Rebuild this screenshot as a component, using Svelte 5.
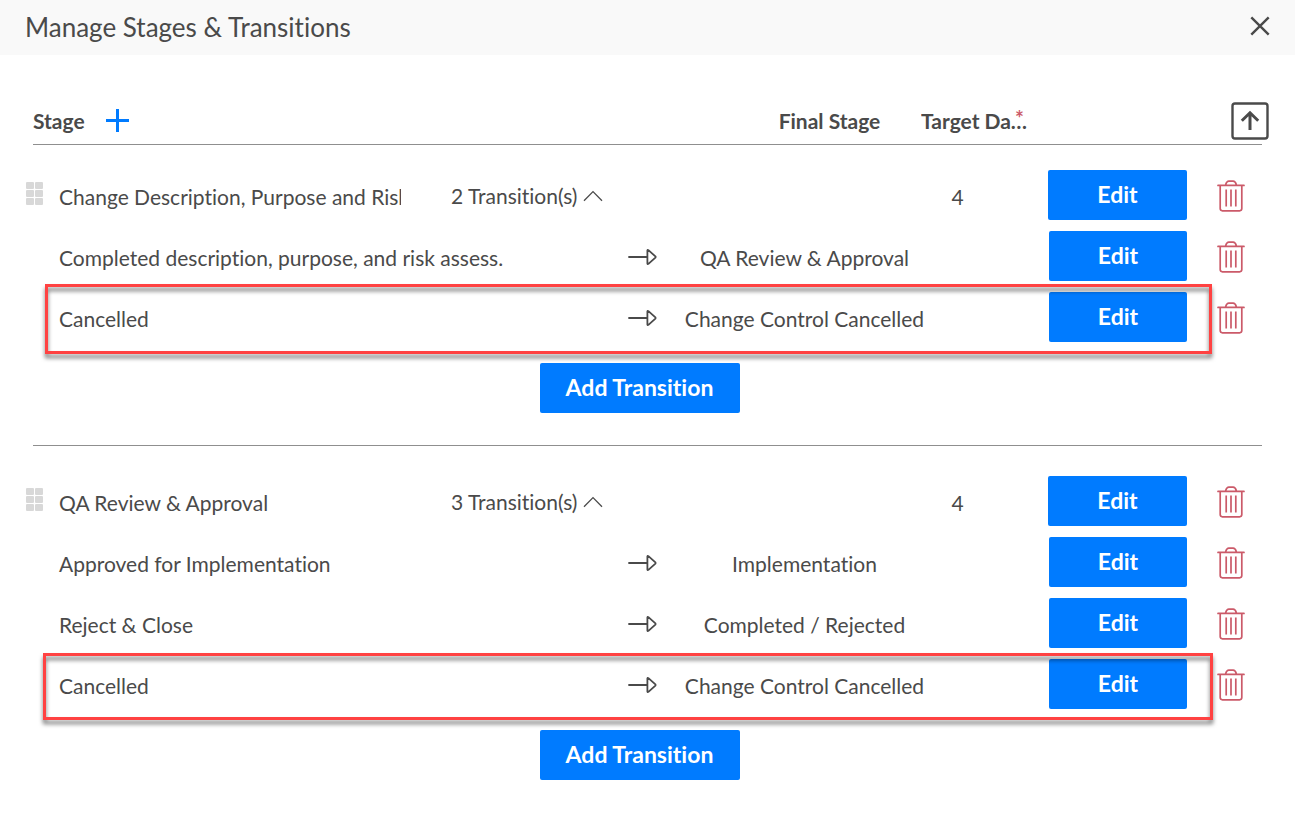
<script>
  const stages = [
    {
      name: 'Change Description, Purpose and Risk Assessment',
      days: 4,
      transitions: [
        { name: 'Completed description, purpose, and risk assess.', to: 'QA Review & Approval' },
        { name: 'Cancelled', to: 'Change Control Cancelled', mark: 'tall' }
      ]
    },
    {
      name: 'QA Review & Approval',
      days: 4,
      transitions: [
        { name: 'Approved for Implementation', to: 'Implementation' },
        { name: 'Reject & Close', to: 'Completed / Rejected' },
        { name: 'Cancelled', to: 'Change Control Cancelled', mark: 'wide' }
      ]
    }
  ];
</script>

{#snippet actions(label)}
  <button class="primary edit" aria-label={`Edit ${label}`}>Edit</button>
  <button class="plain trash" aria-label={`Delete ${label}`}>
    <svg width="28" height="32" viewBox="0 0 28 32" fill="none" stroke="#cb5a69" stroke-width="1.7" stroke-linecap="round" stroke-linejoin="round">
      <path d="M1 5.4h26M8.5 5.2c.6-2.2 1.7-4 3.4-4h4.2c1.7 0 2.8 1.8 3.4 4M3.2 5.6v23c0 1.4.8 2.2 2.2 2.2h17.2c1.4 0 2.2-.8 2.2-2.2v-23" />
      <path stroke-linecap="butt" d="M9.2 9.5v17M14 9.5v17M18.8 9.5v17" />
    </svg>
  </button>
{/snippet}

<div class="dialog" role="dialog" aria-labelledby="title">
  <header class="titlebar">
    <h1 id="title">Manage Stages &amp; Transitions</h1>
    <button class="plain" aria-label="Close">
      <svg width="20" height="20" viewBox="0 0 20 20" stroke="#4a4a4a" stroke-width="2.4">
        <path d="M1.3 1.3l17.4 17.4M18.7 1.3L1.3 18.7" />
      </svg>
    </button>
  </header>

  <div class="columns">
    <div class="col-stage">
      <span>Stage</span>
      <button class="plain" aria-label="Add stage">
        <svg width="24" height="24" viewBox="0 0 24 24" stroke="#007bff" stroke-width="3">
          <path d="M12.5 0v23M1 11.5h23" />
        </svg>
      </button>
    </div>
    <span class="col-final">Final Stage</span>
    <span class="col-days"><span class="clip">Target Days</span><sup>*</sup></span>
    <button class="plain top" aria-label="Move to top">
      <svg width="38" height="38" viewBox="0 0 38 38" fill="none" stroke="#4a4a4a">
        <rect x="1.5" y="1.5" width="35" height="35" rx="2.5" stroke-width="2.4" />
        <path d="M19 28V11M10.8 18.8L19 10.8l8.2 8" stroke-width="3" />
      </svg>
    </button>
  </div>

  {#each stages as stage}
    <section>
      <div class="row stage">
        <svg class="grip" width="18" height="24" viewBox="0 0 18 24" fill="#d8d8d8">
          {#each [0, 8, 16] as y}
            <rect x="0" y={y} width="8" height="7" rx="1" />
            <rect x="9" y={y} width="8" height="7" rx="1" />
          {/each}
        </svg>
        <span class="name clipped">{stage.name}</span>
        <button class="plain toggle" aria-expanded="true">
          {stage.transitions.length} Transition(s)
          <svg width="20" height="12" viewBox="0 0 20 12" fill="none" stroke="#4a4a4a" stroke-width="1.3">
            <path d="M1 10.8L10 1.6l9 9.2" />
          </svg>
        </button>
        <span class="days">{stage.days}</span>
        {@render actions(stage.name)}
      </div>
      {#each stage.transitions as t}
        <div class="row transition">
          <span class="name">{t.name}</span>
          <svg class="arrow" width="30" height="18" viewBox="0 0 30 18" fill="none" stroke="#4a4a4a" stroke-width="1.8" stroke-linecap="round" stroke-linejoin="round">
            <path d="M1 9h18M19.4 2.5v13q.2 1 1 .4L27.4 9.6q.5-.6 0-1.2L20.4 2.1q-.8-.6-1 .4z" />
          </svg>
          <span class="target">{t.to}</span>
          {@render actions(t.name)}
          {#if t.mark}<span class="mark {t.mark}"></span>{/if}
        </div>
      {/each}
      <button class="primary add">Add Transition</button>
    </section>
  {/each}
</div>

<style>
  :global(body) {
    margin: 0;
    background: #fff;
  }
  .dialog {
    color: #4a4a4a;
    font: 21px/28px Lato, sans-serif;
    font-variant-ligatures: none;
  }
  button {
    font: inherit;
    font-variant-ligatures: none;
    color: inherit;
    cursor: pointer;
  }
  svg {
    display: block;
    flex: none;
  }
  .plain {
    display: flex;
    padding: 0;
    border: 0;
    background: none;
  }
  .titlebar {
    display: flex;
    align-items: center;
    justify-content: space-between;
    height: 55px;
    padding: 0 25px 2px;
    box-sizing: border-box;
    background: #f9f9f9;
  }
  .titlebar .plain {
    padding-bottom: 2px;
  }
  h1 {
    margin: 0;
    font-size: 26px;
    font-weight: 400;
  }
  .columns {
    display: grid;
    grid-template-columns: minmax(0, 705fr) minmax(0, 183fr) 108px minmax(0, 233fr);
    align-items: center;
    height: 90px;
    margin: 0 33px;
    padding-top: 42px;
    box-sizing: border-box;
    border-bottom: 1px solid #8f8f8f;
    font-weight: 700;
  }
  .col-stage {
    display: flex;
    align-items: center;
    gap: 20px;
  }
  .col-final {
    text-align: center;
  }
  .col-days {
    position: relative;
  }
  .clip {
    display: block;
    overflow: hidden;
    text-overflow: ellipsis;
    white-space: nowrap;
  }
  sup {
    position: absolute;
    top: 1px;
    right: 5px;
    color: #cb5a69;
    font-size: 21px;
    font-weight: 700;
    line-height: 20px;
  }
  .top {
    justify-self: end;
    margin-right: -7px;
  }
  section {
    display: flex;
    flex-direction: column;
    gap: 11px;
    margin: 0 33px;
    padding: 25px 0 32px;
  }
  section + section {
    padding-top: 30px;
    border-top: 1px solid #8f8f8f;
  }
  .row {
    position: relative;
    display: grid;
    align-items: center;
    height: 50px;
    margin: 0 17px 0 -7px;
    white-space: nowrap;
  }
  .stage {
    grid-template-columns: 33px minmax(0, 392fr) minmax(0, 444fr) minmax(0, 125fr) 167px 58px;
  }
  .transition {
    grid-template-columns: minmax(0, 556fr) 55px minmax(0, 269fr) minmax(0, 81fr) 167px 58px;
    padding-left: 33px;
  }
  .grip {
    margin-bottom: 2px;
  }
  .name {
    padding-top: 4px;
  }
  .clipped {
    overflow: hidden;
    margin-right: 50px;
  }
  .toggle {
    align-items: center;
    gap: 6px;
    justify-self: start;
    padding-top: 2px;
  }
  .days {
    padding-top: 4px;
    text-align: center;
  }
  .arrow {
    justify-self: center;
    margin-top: 2px;
  }
  .target {
    padding-top: 3px;
    text-align: center;
  }
  .primary {
    height: 50px;
    padding: 0 0 2px;
    border: 0;
    border-radius: 2px;
    background: #007bff;
    color: #fff;
    font-size: 23px;
    font-weight: 700;
  }
  .edit {
    width: 139px;
    justify-self: end;
    grid-column: -3;
  }
  .transition .edit {
    width: 138px;
  }
  .trash {
    justify-self: end;
    padding-top: 2px;
  }
  .add {
    width: 200px;
    margin-top: 10px;
    margin-left: calc(50% - 108px);
  }
  .mark {
    position: absolute;
    border: 3px solid #ff4242;
    filter: drop-shadow(0 4px 2px rgba(0, 0, 0, 0.55));
    pointer-events: none;
  }
  .tall {
    inset: -8px 33px -12px 19px;
  }
  .wide {
    inset: -6px 32px -11px 17px;
  }
</style>
